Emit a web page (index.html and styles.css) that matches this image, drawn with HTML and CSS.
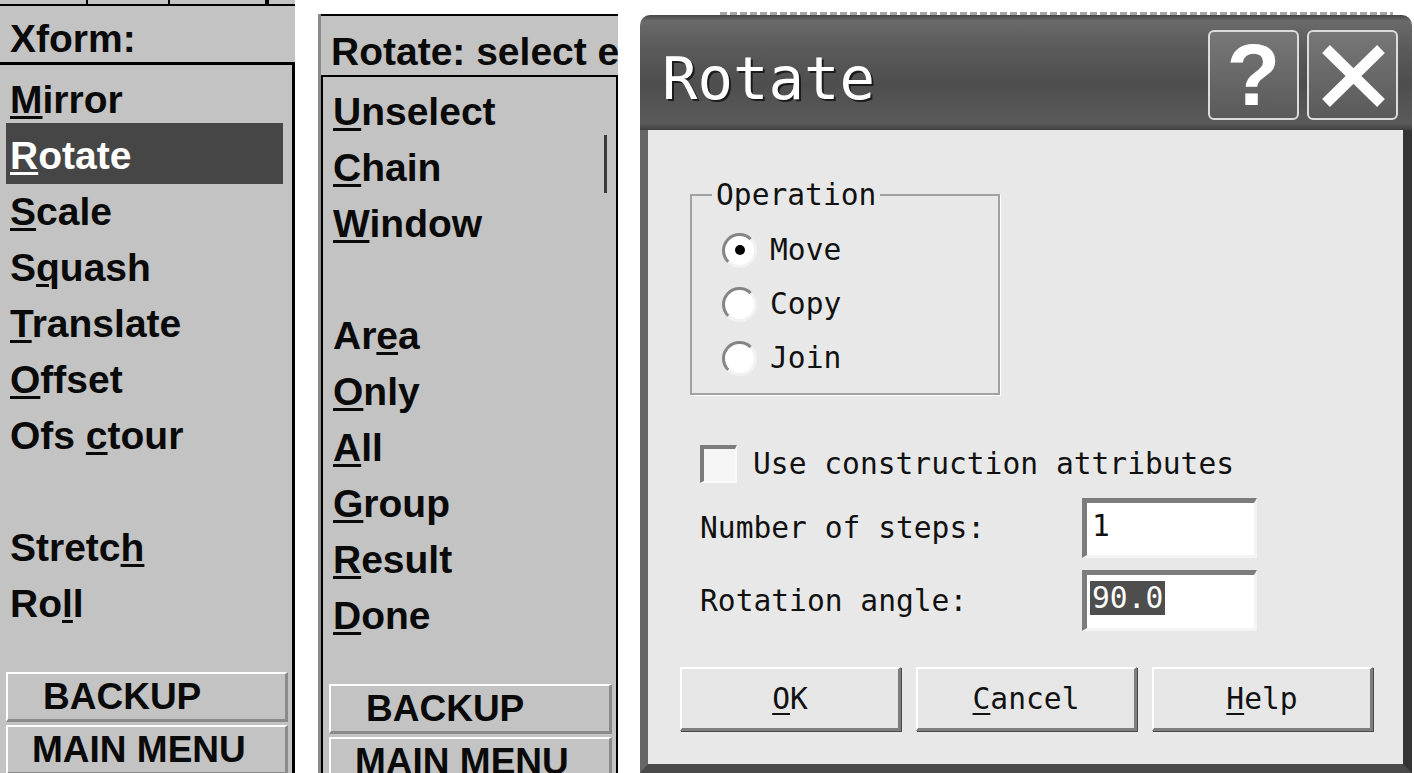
FILE: index.html
```html
<!DOCTYPE html>
<html lang="en">
<head>
<meta charset="UTF-8">
<meta name="viewport" content="width=device-width, initial-scale=1.0">
<title>Xform - Rotate</title>
<link rel="stylesheet" href="styles.css">
</head>
<body>

<!-- Xform menu -->
<div class="menu menu-xform">
    <div class="toolbar"><span></span><span></span><span></span><span></span></div>
    <div class="menu-title">Xform:</div>
    <div class="menu-body">
        <ul class="menu-list">
            <li class="menu-item"><u>M</u>irror</li>
            <li class="menu-item is-active"><u>R</u>otate</li>
            <li class="menu-item"><u>S</u>cale</li>
            <li class="menu-item">S<u>q</u>uash</li>
            <li class="menu-item"><u>T</u>ranslate</li>
            <li class="menu-item"><u>O</u>ffset</li>
            <li class="menu-item">Ofs <u>c</u>tour</li>
            <li class="menu-item"></li>
            <li class="menu-item">Stretc<u>h</u></li>
            <li class="menu-item">Ro<u>l</u>l</li>
        </ul>
        <div class="menu-buttons">
            <button class="menu-btn btn-backup">BACKUP</button>
            <button class="menu-btn btn-main">MAIN MENU</button>
        </div>
    </div>
</div>

<!-- Rotate selection menu -->
<div class="menu menu-select">
    <div class="menu-title">Rotate: select e</div>
    <div class="menu-body">
        <span class="menu-mark"></span>
        <ul class="menu-list">
            <li class="menu-item"><u>U</u>nselect</li>
            <li class="menu-item"><u>C</u>hain</li>
            <li class="menu-item"><u>W</u>indow</li>
            <li class="menu-item"></li>
            <li class="menu-item">Ar<u>e</u>a</li>
            <li class="menu-item"><u>O</u>nly</li>
            <li class="menu-item"><u>A</u>ll</li>
            <li class="menu-item"><u>G</u>roup</li>
            <li class="menu-item"><u>R</u>esult</li>
            <li class="menu-item"><u>D</u>one</li>
        </ul>
        <div class="menu-buttons">
            <button class="menu-btn btn-backup">BACKUP</button>
            <button class="menu-btn btn-main">MAIN MENU</button>
        </div>
    </div>
</div>

<!-- Rotate dialog -->
<div class="dialog-area">
    <div class="behind-strip"></div>
    <div class="dialog">
        <div class="titlebar">
            <span class="title">Rotate</span>
            <div class="title-buttons">
                <span class="title-btn title-help">?</span>
                <span class="title-btn title-close">
                    <svg width="86" height="86" viewBox="0 0 86 86">
                        <path d="M16 17 L71 71 M71 17 L16 71" stroke="#fff" stroke-width="11" fill="none"/>
                    </svg>
                </span>
            </div>
        </div>
        <div class="dialog-body">
            <fieldset class="group">
                <legend>Operation</legend>
                <div class="radio-row"><span class="radio is-checked"></span>Move</div>
                <div class="radio-row"><span class="radio"></span>Copy</div>
                <div class="radio-row"><span class="radio"></span>Join</div>
            </fieldset>
            <div class="check-row"><span class="checkbox"></span>Use construction attributes</div>
            <div class="fields">
                <span>Number of steps:</span>
                <span class="field"><span class="field-text">1</span></span>
                <span>Rotation angle:</span>
                <span class="field"><span class="field-text is-selected">90.0</span></span>
            </div>
            <div class="dialog-buttons">
                <button class="dlg-btn"><u>O</u>K</button>
                <button class="dlg-btn"><u>C</u>ancel</button>
                <button class="dlg-btn"><u>H</u>elp</button>
            </div>
        </div>
    </div>
</div>

</body>
</html>
```

FILE: styles.css
```css
body {
    margin: 0;
    height: 773px;
    overflow: hidden;
    display: flex;
    align-items: flex-start;
    background-color: #fff;
    font-family: "Liberation Sans", Arial, sans-serif;
}

/* side menus */
.menu {
    width: 295px;
    height: 773px;
    display: flex;
    flex-direction: column;
    background-color: #c3c3c3;
    color: #0a0a0a;
    font-size: 39px;
    font-weight: bold;
}
.menu-select {
    width: 297px;
    height: 759px;
    margin-top: 14px;
    margin-left: 23px;
    border-left: 3px solid #8c8c8c;
}
.toolbar {
    height: 4px;
    flex-shrink: 0;
    display: flex;
    border-bottom: 2px solid #000;
}
.toolbar span {
    border-right: 2px solid #000;
}
.toolbar span:nth-child(1) {
    width: 86px;
}
.toolbar span:nth-child(2) {
    width: 80px;
}
.toolbar span:nth-child(3) {
    width: 95px;
}
.menu-title {
    height: 46px;
    flex-shrink: 0;
    padding: 10px 0 0 10px;
    line-height: 46px;
    border-bottom: 3px solid #000;
    white-space: nowrap;
    overflow: hidden;
}
.menu-select .menu-title {
    padding-top: 13px;
    border-top: 2px solid #000;
    border-bottom-width: 2px;
}
.menu-body {
    flex-grow: 1;
    min-height: 0;
    overflow: hidden;
    position: relative;
    padding: 7px 4px 0 6px;
    border-right: 3px solid #000;
}
.menu-select .menu-body {
    border-left: 2px solid #000;
    border-right-width: 2px;
}
.menu-mark {
    position: absolute;
    left: 281px;
    top: 58px;
    width: 3px;
    height: 58px;
    background-color: #3a3a3a;
}
.menu-list {
    list-style-type: none;
    margin: 0;
    padding: 0;
}
.menu-item {
    height: 56px;
    line-height: 56px;
    padding-left: 4px;
    margin-right: 5px;
    white-space: nowrap;
}
.menu-item u {
    text-decoration-thickness: 3px;
    text-underline-offset: 3px;
}
.menu-item.is-active {
    margin-top: -5px;
    padding-top: 5px;
    background-color: #464646;
    color: #fff;
}
.menu-buttons {
    margin-top: 40px;
    display: flex;
    flex-direction: column;
    gap: 3px;
}
.menu-btn {
    height: 50px;
    flex-shrink: 0;
    box-sizing: border-box;
    padding: 0;
    border-style: solid;
    border-width: 2px 3px 3px 2px;
    border-color: #fff #8a8a8a #8a8a8a #fff;
    background-color: #c3c3c3;
    color: #0a0a0a;
    font-family: "Liberation Sans", Arial, sans-serif;
    font-size: 37px;
    font-weight: bold;
    line-height: 45px;
    text-align: left;
    white-space: nowrap;
}
.btn-backup {
    padding-left: 35px;
}
.btn-main {
    padding-left: 24px;
}

/* dialog */
.dialog-area {
    width: 772px;
    margin-left: 22px;
}
.behind-strip {
    height: 3px;
    margin: 12px 19px 0 80px;
    background: repeating-linear-gradient(90deg, #a5a5a5 0 7px, transparent 7px 10px);
}
.dialog {
    display: flex;
    flex-direction: column;
    font-family: "DejaVu Sans Mono", monospace;
    font-size: 29.6px;
    color: #111;
}
.titlebar {
    height: 115px;
    box-sizing: border-box;
    padding: 15px 14px 0 22px;
    display: flex;
    justify-content: space-between;
    align-items: flex-start;
    border-radius: 10px 10px 0 0;
    background: linear-gradient(#464646 0, #6a6a6a 5%, #5a5a5a 30%, #4e4e4e 60%, #5a5a5a 94%, #404040 100%);
}
.title {
    margin-top: 14px;
    font-size: 59px;
    line-height: 69px;
    color: #fff;
    text-shadow: 2px 2px 0 #1c1c1c;
}
.title-buttons {
    display: flex;
    gap: 8px;
}
.title-btn {
    width: 91px;
    height: 90px;
    box-sizing: border-box;
    display: flex;
    align-items: center;
    justify-content: center;
    border: 2px solid #dcdcdc;
    border-radius: 6px;
    background: linear-gradient(#777, #5a5a5a);
    color: #fff;
}
.title-help {
    font-family: "Liberation Sans", Arial, sans-serif;
    font-size: 88px;
    font-weight: bold;
    line-height: 86px;
}
.dialog-body {
    height: 643px;
    box-sizing: border-box;
    padding-top: 50px;
    border-left: 8px solid #666;
    border-right: 9px solid #343434;
    border-bottom: 9px solid #4a4a4a;
    background-color: #e8e8e8;
}
.group {
    width: 310px;
    min-width: 0;
    box-sizing: border-box;
    margin: 0 0 0 42px;
    padding: 13px 0 8px 20px;
    border: 2px solid #a2a2a2;
    box-shadow: 1px 1px 0 #fff;
}
.group legend {
    padding: 0 4px;
    line-height: 30px;
}
.radio-row {
    height: 54px;
    display: flex;
    align-items: center;
    gap: 13px;
    padding-left: 10px;
}
.radio {
    width: 35px;
    height: 35px;
    box-sizing: border-box;
    display: flex;
    align-items: center;
    justify-content: center;
    border: 3px solid;
    border-color: #858585 #f2f2f2 #f2f2f2 #858585;
    border-radius: 50%;
    background-color: #fff;
}
.radio.is-checked::after {
    content: "";
    width: 10px;
    height: 10px;
    border-radius: 50%;
    background-color: #000;
}
.check-row {
    height: 38px;
    display: flex;
    align-items: center;
    gap: 16px;
    margin-top: 50px;
    padding-left: 52px;
}
.checkbox {
    width: 37px;
    height: 38px;
    box-sizing: border-box;
    border-style: solid;
    border-width: 4px 2px 2px 4px;
    border-color: #7c7c7c #fafafa #fafafa #7c7c7c;
    background-color: #f6f6f6;
}
.fields {
    display: grid;
    grid-template-columns: 382px 175px;
    grid-template-rows: 60px 61px;
    row-gap: 12px;
    align-items: center;
    margin-top: 15px;
    padding-left: 52px;
}
.field {
    height: 100%;
    box-sizing: border-box;
    padding: 6px 0 0 3px;
    border-style: solid;
    border-width: 5px 3px 3px 5px;
    border-color: #7d7d7d #f4f4f4 #f4f4f4 #7d7d7d;
    background-color: #fff;
}
.field-text {
    display: inline-block;
    padding: 0 2px;
    line-height: 34px;
}
.field-text.is-selected {
    background-color: #4e4e4e;
    color: #fff;
}
.dialog-buttons {
    display: flex;
    gap: 15px;
    margin-top: 36px;
    padding-left: 32px;
}
.dlg-btn {
    width: 221px;
    height: 64px;
    box-sizing: border-box;
    padding: 0;
    border-style: solid;
    border-width: 2px 3px 3px 2px;
    border-color: #fff #7e7e7e #7e7e7e #fff;
    background-color: #e6e6e6;
    box-shadow: 1px 1px 0 #4a4a4a;
    color: #111;
    font: inherit;
}
.dlg-btn u {
    text-decoration-thickness: 2px;
    text-underline-offset: 4px;
}
```
